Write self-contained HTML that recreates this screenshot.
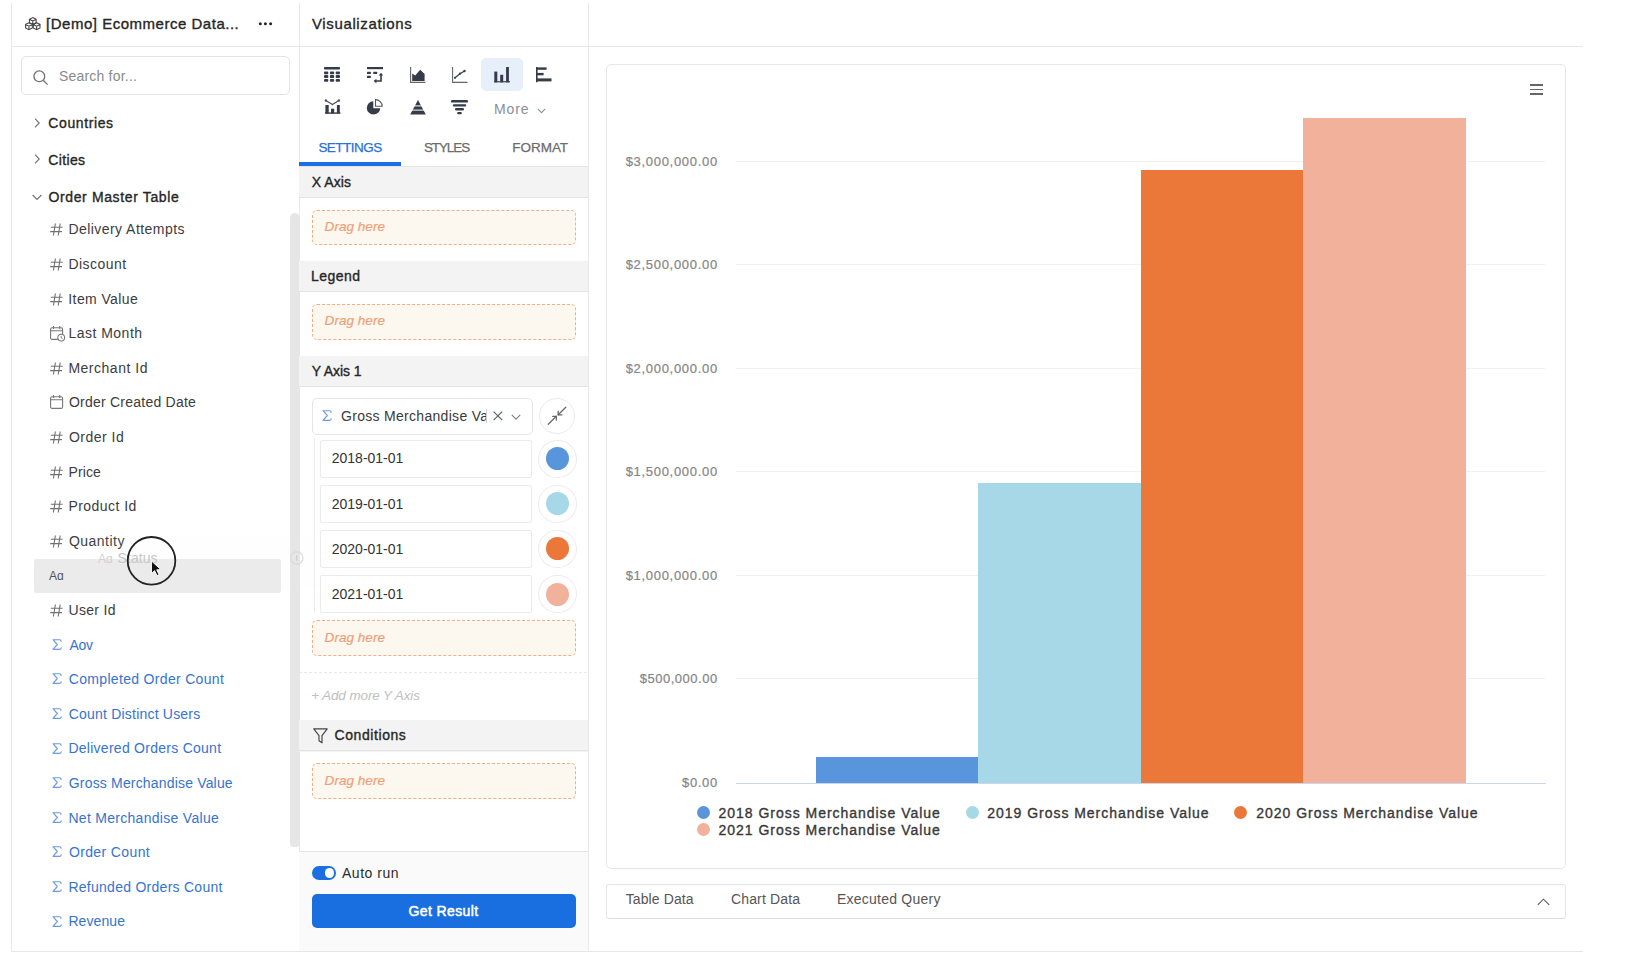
<!DOCTYPE html>
<html><head><meta charset="utf-8"><style>
html,body{margin:0;padding:0;width:1634px;height:958px;overflow:hidden;background:#fff}
body{position:relative;font-family:"Liberation Sans",sans-serif}
.t{position:absolute;white-space:nowrap;font-family:"Liberation Sans",sans-serif}
</style></head><body>
<div style="position:absolute;left:10.5px;top:3px;width:1.0px;height:948px;background:#e9e9e9"></div>
<div style="position:absolute;left:11px;top:950.5px;width:1572px;height:1.0px;background:#e6e6e6"></div>
<div style="position:absolute;left:11px;top:45.5px;width:1572px;height:1.0px;background:#e8e8e8"></div>
<div style="position:absolute;left:298.5px;top:3px;width:1.0px;height:948px;background:#e9e9e9"></div>
<div style="position:absolute;left:587.5px;top:3px;width:1.0px;height:948px;background:#e9e9e9"></div>
<svg style="position:absolute;left:24.6px;top:16.8px;overflow:visible" width="15.6" height="13.2" viewBox="0.4 0.4 16.2 14.2" preserveAspectRatio="none"><g fill="none" stroke="#444" stroke-width="1.1"><path d="M8.5 1 L12 2.8 L12 6.6 L8.5 8.4 L5 6.6 L5 2.8 Z M5 2.8 L8.5 4.6 L12 2.8 M8.5 4.6 L8.5 8.4"/><path d="M4.5 6.6 L8 8.4 L8 12.2 L4.5 14 L1 12.2 L1 8.4 Z M1 8.4 L4.5 10.2 L8 8.4 M4.5 10.2 L4.5 14"/><path d="M12.5 6.6 L16 8.4 L16 12.2 L12.5 14 L9 12.2 L9 8.4 Z M9 8.4 L12.5 10.2 L16 8.4 M12.5 10.2 L12.5 14"/></g></svg>
<div class="t" style="left:46.00px;top:15.95px;font-size:15px;line-height:15px;font-weight:400;color:#262626;font-style:normal;letter-spacing:0.517px;-webkit-text-stroke:0.35px #262626;">[Demo] Ecommerce Data...</div>
<svg style="position:absolute;left:256px;top:20px;overflow:visible" width="18" height="8" viewBox="0 0 18 8" preserveAspectRatio="none"><circle cx="4.300000000000011" cy="3.8" r="1.5" fill="#262626"/><circle cx="9.399999999999977" cy="3.8" r="1.5" fill="#262626"/><circle cx="14.600000000000023" cy="3.8" r="1.5" fill="#262626"/></svg>
<div style="position:absolute;left:21px;top:56px;width:269px;height:39px;border:1px solid #e3e3e3;border-radius:5px;box-sizing:border-box;background:#fff"></div>
<svg style="position:absolute;left:32.5px;top:69.5px;overflow:visible" width="16" height="16" viewBox="0 0 16 16" preserveAspectRatio="none"><g fill="none" stroke="#707070" stroke-width="1.3"><circle cx="6.3" cy="6.3" r="5.4"/><path d="M10.2 10.2 L14.6 14.6"/></g></svg>
<div class="t" style="left:58.90px;top:68.60px;font-size:14px;line-height:14px;font-weight:400;color:#8a8a8a;font-style:normal;letter-spacing:0.208px;">Search for...</div>
<svg style="position:absolute;left:33.5px;top:117.5px;overflow:visible" width="6" height="10" viewBox="0 0 6 10" preserveAspectRatio="none"><path d="M1 0.6 L5.2 5 L1 9.4" fill="none" stroke="#707070" stroke-width="1.1"/></svg>
<div class="t" style="left:48.30px;top:116.10px;font-size:14px;line-height:14px;font-weight:400;color:#262626;font-style:normal;letter-spacing:0.613px;-webkit-text-stroke:0.35px #262626;">Countries</div>
<svg style="position:absolute;left:33.5px;top:154px;overflow:visible" width="6" height="10" viewBox="0 0 6 10" preserveAspectRatio="none"><path d="M1 0.6 L5.2 5 L1 9.4" fill="none" stroke="#707070" stroke-width="1.1"/></svg>
<div class="t" style="left:48.30px;top:152.60px;font-size:14px;line-height:14px;font-weight:400;color:#262626;font-style:normal;letter-spacing:0.340px;-webkit-text-stroke:0.35px #262626;">Cities</div>
<svg style="position:absolute;left:31.5px;top:193.5px;overflow:visible" width="10" height="6" viewBox="0 0 10 6" preserveAspectRatio="none"><path d="M0.6 1 L5 5.4 L9.4 1" fill="none" stroke="#707070" stroke-width="1.1"/></svg>
<div class="t" style="left:48.40px;top:189.60px;font-size:14px;line-height:14px;font-weight:400;color:#262626;font-style:normal;letter-spacing:0.635px;-webkit-text-stroke:0.35px #262626;">Order Master Table</div>
<svg style="position:absolute;left:50px;top:223.3px;overflow:visible" width="13" height="13" viewBox="0 0 13 13" preserveAspectRatio="none"><g fill="none" stroke="#707070" stroke-width="1.1"><path d="M5.4 0.5 L3.4 12.5 M10.2 0.5 L8.2 12.5 M0.8 4.2 L12.6 4.2 M0.2 8.6 L12 8.6"/></g></svg>
<div class="t" style="left:68.40px;top:222.40px;font-size:14px;line-height:14px;font-weight:400;color:#3c3c3c;font-style:normal;letter-spacing:0.450px;">Delivery Attempts</div>
<svg style="position:absolute;left:50px;top:257.90000000000003px;overflow:visible" width="13" height="13" viewBox="0 0 13 13" preserveAspectRatio="none"><g fill="none" stroke="#707070" stroke-width="1.1"><path d="M5.4 0.5 L3.4 12.5 M10.2 0.5 L8.2 12.5 M0.8 4.2 L12.6 4.2 M0.2 8.6 L12 8.6"/></g></svg>
<div class="t" style="left:68.40px;top:257.00px;font-size:14px;line-height:14px;font-weight:400;color:#3c3c3c;font-style:normal;letter-spacing:0.457px;">Discount</div>
<svg style="position:absolute;left:50px;top:292.5px;overflow:visible" width="13" height="13" viewBox="0 0 13 13" preserveAspectRatio="none"><g fill="none" stroke="#707070" stroke-width="1.1"><path d="M5.4 0.5 L3.4 12.5 M10.2 0.5 L8.2 12.5 M0.8 4.2 L12.6 4.2 M0.2 8.6 L12 8.6"/></g></svg>
<div class="t" style="left:68.30px;top:291.60px;font-size:14px;line-height:14px;font-weight:400;color:#3c3c3c;font-style:normal;letter-spacing:0.400px;">Item Value</div>
<svg style="position:absolute;left:49.5px;top:325.6px;overflow:visible" width="15" height="15" viewBox="0 0 15 15" preserveAspectRatio="none"><g fill="none" stroke="#777" stroke-width="1.1"><rect x="0.6" y="1.8" width="12" height="11.6" rx="1.5"/><path d="M0.6 4.8 L12.6 4.8 M3.5 0 L3.5 3 M9.7 0 L9.7 3"/></g><circle cx="11.2" cy="11.6" r="3.4" fill="#fff" stroke="#777" stroke-width="1.1"/><path d="M11.2 9.8 L11.2 11.8 L12.6 12.6" fill="none" stroke="#777" stroke-width="0.9"/></svg>
<div class="t" style="left:68.40px;top:326.20px;font-size:14px;line-height:14px;font-weight:400;color:#3c3c3c;font-style:normal;letter-spacing:0.489px;">Last Month</div>
<svg style="position:absolute;left:50px;top:361.70000000000005px;overflow:visible" width="13" height="13" viewBox="0 0 13 13" preserveAspectRatio="none"><g fill="none" stroke="#707070" stroke-width="1.1"><path d="M5.4 0.5 L3.4 12.5 M10.2 0.5 L8.2 12.5 M0.8 4.2 L12.6 4.2 M0.2 8.6 L12 8.6"/></g></svg>
<div class="t" style="left:68.40px;top:360.80px;font-size:14px;line-height:14px;font-weight:400;color:#3c3c3c;font-style:normal;letter-spacing:0.510px;">Merchant Id</div>
<svg style="position:absolute;left:49.5px;top:394.8px;overflow:visible" width="15" height="15" viewBox="0 0 15 15" preserveAspectRatio="none"><g fill="none" stroke="#777" stroke-width="1.1"><rect x="0.6" y="1.8" width="12" height="11.6" rx="1.5"/><path d="M0.6 4.8 L12.6 4.8 M3.5 0 L3.5 3 M9.7 0 L9.7 3"/></g></svg>
<div class="t" style="left:68.90px;top:395.40px;font-size:14px;line-height:14px;font-weight:400;color:#3c3c3c;font-style:normal;letter-spacing:0.235px;">Order Created Date</div>
<svg style="position:absolute;left:50px;top:430.90000000000003px;overflow:visible" width="13" height="13" viewBox="0 0 13 13" preserveAspectRatio="none"><g fill="none" stroke="#707070" stroke-width="1.1"><path d="M5.4 0.5 L3.4 12.5 M10.2 0.5 L8.2 12.5 M0.8 4.2 L12.6 4.2 M0.2 8.6 L12 8.6"/></g></svg>
<div class="t" style="left:68.90px;top:430.00px;font-size:14px;line-height:14px;font-weight:400;color:#3c3c3c;font-style:normal;letter-spacing:0.500px;">Order Id</div>
<svg style="position:absolute;left:50px;top:465.5px;overflow:visible" width="13" height="13" viewBox="0 0 13 13" preserveAspectRatio="none"><g fill="none" stroke="#707070" stroke-width="1.1"><path d="M5.4 0.5 L3.4 12.5 M10.2 0.5 L8.2 12.5 M0.8 4.2 L12.6 4.2 M0.2 8.6 L12 8.6"/></g></svg>
<div class="t" style="left:68.40px;top:464.60px;font-size:14px;line-height:14px;font-weight:400;color:#3c3c3c;font-style:normal;letter-spacing:0.150px;">Price</div>
<svg style="position:absolute;left:50px;top:500.1px;overflow:visible" width="13" height="13" viewBox="0 0 13 13" preserveAspectRatio="none"><g fill="none" stroke="#707070" stroke-width="1.1"><path d="M5.4 0.5 L3.4 12.5 M10.2 0.5 L8.2 12.5 M0.8 4.2 L12.6 4.2 M0.2 8.6 L12 8.6"/></g></svg>
<div class="t" style="left:68.40px;top:499.20px;font-size:14px;line-height:14px;font-weight:400;color:#3c3c3c;font-style:normal;letter-spacing:0.456px;">Product Id</div>
<svg style="position:absolute;left:50px;top:534.7px;overflow:visible" width="13" height="13" viewBox="0 0 13 13" preserveAspectRatio="none"><g fill="none" stroke="#707070" stroke-width="1.1"><path d="M5.4 0.5 L3.4 12.5 M10.2 0.5 L8.2 12.5 M0.8 4.2 L12.6 4.2 M0.2 8.6 L12 8.6"/></g></svg>
<div class="t" style="left:68.90px;top:533.80px;font-size:14px;line-height:14px;font-weight:400;color:#3c3c3c;font-style:normal;letter-spacing:0.486px;">Quantity</div>
<svg style="position:absolute;left:50px;top:603.9000000000001px;overflow:visible" width="13" height="13" viewBox="0 0 13 13" preserveAspectRatio="none"><g fill="none" stroke="#707070" stroke-width="1.1"><path d="M5.4 0.5 L3.4 12.5 M10.2 0.5 L8.2 12.5 M0.8 4.2 L12.6 4.2 M0.2 8.6 L12 8.6"/></g></svg>
<div class="t" style="left:68.50px;top:603.00px;font-size:14px;line-height:14px;font-weight:400;color:#3c3c3c;font-style:normal;letter-spacing:0.317px;">User Id</div>
<svg style="position:absolute;left:51.5px;top:638.8px;overflow:visible" width="10" height="11" viewBox="0 0 10 11" preserveAspectRatio="none"><path d="M9 2.2 Q9 0.7 7.6 0.7 L1 0.7 L5.3 5.5 L1 10.3 L7.8 10.3 Q9.1 10.3 9.2 8.8" fill="none" stroke="#6c9be0" stroke-width="1.15" stroke-linejoin="round" stroke-linecap="round"/></svg>
<div class="t" style="left:69.50px;top:637.60px;font-size:14px;line-height:14px;font-weight:400;color:#3474d0;font-style:normal;letter-spacing:-0.350px;">Aov</div>
<svg style="position:absolute;left:51.5px;top:673.4px;overflow:visible" width="10" height="11" viewBox="0 0 10 11" preserveAspectRatio="none"><path d="M9 2.2 Q9 0.7 7.6 0.7 L1 0.7 L5.3 5.5 L1 10.3 L7.8 10.3 Q9.1 10.3 9.2 8.8" fill="none" stroke="#6c9be0" stroke-width="1.15" stroke-linejoin="round" stroke-linecap="round"/></svg>
<div class="t" style="left:68.80px;top:672.20px;font-size:14px;line-height:14px;font-weight:400;color:#3474d0;font-style:normal;letter-spacing:0.320px;">Completed Order Count</div>
<svg style="position:absolute;left:51.5px;top:708.0px;overflow:visible" width="10" height="11" viewBox="0 0 10 11" preserveAspectRatio="none"><path d="M9 2.2 Q9 0.7 7.6 0.7 L1 0.7 L5.3 5.5 L1 10.3 L7.8 10.3 Q9.1 10.3 9.2 8.8" fill="none" stroke="#6c9be0" stroke-width="1.15" stroke-linejoin="round" stroke-linecap="round"/></svg>
<div class="t" style="left:68.80px;top:706.80px;font-size:14px;line-height:14px;font-weight:400;color:#3474d0;font-style:normal;letter-spacing:0.200px;">Count Distinct Users</div>
<svg style="position:absolute;left:51.5px;top:742.5999999999999px;overflow:visible" width="10" height="11" viewBox="0 0 10 11" preserveAspectRatio="none"><path d="M9 2.2 Q9 0.7 7.6 0.7 L1 0.7 L5.3 5.5 L1 10.3 L7.8 10.3 Q9.1 10.3 9.2 8.8" fill="none" stroke="#6c9be0" stroke-width="1.15" stroke-linejoin="round" stroke-linecap="round"/></svg>
<div class="t" style="left:68.40px;top:741.40px;font-size:14px;line-height:14px;font-weight:400;color:#3474d0;font-style:normal;letter-spacing:0.267px;">Delivered Orders Count</div>
<svg style="position:absolute;left:51.5px;top:777.2px;overflow:visible" width="10" height="11" viewBox="0 0 10 11" preserveAspectRatio="none"><path d="M9 2.2 Q9 0.7 7.6 0.7 L1 0.7 L5.3 5.5 L1 10.3 L7.8 10.3 Q9.1 10.3 9.2 8.8" fill="none" stroke="#6c9be0" stroke-width="1.15" stroke-linejoin="round" stroke-linecap="round"/></svg>
<div class="t" style="left:68.80px;top:776.00px;font-size:14px;line-height:14px;font-weight:400;color:#3474d0;font-style:normal;letter-spacing:0.173px;">Gross Merchandise Value</div>
<svg style="position:absolute;left:51.5px;top:811.8px;overflow:visible" width="10" height="11" viewBox="0 0 10 11" preserveAspectRatio="none"><path d="M9 2.2 Q9 0.7 7.6 0.7 L1 0.7 L5.3 5.5 L1 10.3 L7.8 10.3 Q9.1 10.3 9.2 8.8" fill="none" stroke="#6c9be0" stroke-width="1.15" stroke-linejoin="round" stroke-linecap="round"/></svg>
<div class="t" style="left:68.40px;top:810.60px;font-size:14px;line-height:14px;font-weight:400;color:#3474d0;font-style:normal;letter-spacing:0.295px;">Net Merchandise Value</div>
<svg style="position:absolute;left:51.5px;top:846.4000000000001px;overflow:visible" width="10" height="11" viewBox="0 0 10 11" preserveAspectRatio="none"><path d="M9 2.2 Q9 0.7 7.6 0.7 L1 0.7 L5.3 5.5 L1 10.3 L7.8 10.3 Q9.1 10.3 9.2 8.8" fill="none" stroke="#6c9be0" stroke-width="1.15" stroke-linejoin="round" stroke-linecap="round"/></svg>
<div class="t" style="left:68.90px;top:845.20px;font-size:14px;line-height:14px;font-weight:400;color:#3474d0;font-style:normal;letter-spacing:0.380px;">Order Count</div>
<svg style="position:absolute;left:51.5px;top:881.0px;overflow:visible" width="10" height="11" viewBox="0 0 10 11" preserveAspectRatio="none"><path d="M9 2.2 Q9 0.7 7.6 0.7 L1 0.7 L5.3 5.5 L1 10.3 L7.8 10.3 Q9.1 10.3 9.2 8.8" fill="none" stroke="#6c9be0" stroke-width="1.15" stroke-linejoin="round" stroke-linecap="round"/></svg>
<div class="t" style="left:68.40px;top:879.80px;font-size:14px;line-height:14px;font-weight:400;color:#3474d0;font-style:normal;letter-spacing:0.270px;">Refunded Orders Count</div>
<svg style="position:absolute;left:51.5px;top:915.5999999999999px;overflow:visible" width="10" height="11" viewBox="0 0 10 11" preserveAspectRatio="none"><path d="M9 2.2 Q9 0.7 7.6 0.7 L1 0.7 L5.3 5.5 L1 10.3 L7.8 10.3 Q9.1 10.3 9.2 8.8" fill="none" stroke="#6c9be0" stroke-width="1.15" stroke-linejoin="round" stroke-linecap="round"/></svg>
<div class="t" style="left:68.40px;top:914.40px;font-size:14px;line-height:14px;font-weight:400;color:#3474d0;font-style:normal;letter-spacing:0.083px;">Revenue</div>
<div style="position:absolute;left:34px;top:559px;width:246.5px;height:34px;background:#ebebeb;border-radius:2px"></div>
<div class="t" style="left:49.00px;top:570.30px;font-size:12px;line-height:12px;font-weight:400;color:#555;font-style:normal;letter-spacing:0.000px;">A&#593;</div>
<div style="position:absolute;left:92px;top:536px;width:248px;height:54px;background:rgba(235,235,235,0.05)"></div>
<div class="t" style="left:98.00px;top:552.50px;font-size:12px;line-height:12px;font-weight:400;color:#d0d0d0;font-style:normal;letter-spacing:0.000px;">A&#593;</div>
<div class="t" style="left:117.60px;top:551.10px;font-size:14px;line-height:14px;font-weight:400;color:#c6c6c6;font-style:normal;letter-spacing:0.060px;">Status</div>
<div style="position:absolute;left:289.5px;top:213px;width:10.0px;height:633.5px;background:#e6e6e6;border-radius:5px 5px 4px 4px"></div>
<svg style="position:absolute;left:290px;top:551px;overflow:visible" width="14" height="14" viewBox="0 0 14 14" preserveAspectRatio="none"><circle cx="6.8" cy="6.9" r="6.2" fill="none" stroke="#d8d8d8" stroke-width="1.1"/><path d="M6.8 4.2 L6.8 9.8" stroke="#d0d0d0" stroke-width="1.5"/></svg>
<svg style="position:absolute;left:126.2px;top:535.5px;overflow:visible" width="50" height="50" viewBox="0 0 50 50" preserveAspectRatio="none"><circle cx="25.5" cy="24.8" r="23.8" fill="none" stroke="#222" stroke-width="1.8"/></svg>
<svg style="position:absolute;left:150px;top:560px;overflow:visible" width="14" height="18" viewBox="0 0 14 18" preserveAspectRatio="none"><path d="M1.5 1 L1.5 13.5 L4.6 10.6 L7 15.6 L9 14.7 L6.7 9.8 L10.8 9.6 Z" fill="#111" stroke="#fff" stroke-width="0.9"/></svg>
<div class="t" style="left:312.00px;top:15.55px;font-size:15px;line-height:15px;font-weight:400;color:#262626;font-style:normal;letter-spacing:0.631px;-webkit-text-stroke:0.35px #262626;">Visualizations</div>
<div style="position:absolute;left:481px;top:58px;width:42px;height:32.5px;background:#e7effa;border-radius:5px"></div>
<svg style="position:absolute;left:324.3px;top:67px;overflow:visible" width="16" height="16" viewBox="0 0 16 16" preserveAspectRatio="none"><g fill="#353b48"><rect x="0" y="0" width="16" height="2.5" rx="0.8"/><rect x="0" y="4.4" width="4.3" height="2.9" rx="1"/><rect x="5.9" y="4.4" width="4.3" height="2.9" rx="1"/><rect x="11.7" y="4.4" width="4.3" height="2.9" rx="1"/><rect x="0" y="8.1" width="4.3" height="2.9" rx="1"/><rect x="5.9" y="8.1" width="4.3" height="2.9" rx="1"/><rect x="11.7" y="8.1" width="4.3" height="2.9" rx="1"/><rect x="0" y="11.9" width="4.3" height="2.9" rx="1"/><rect x="5.9" y="11.9" width="4.3" height="2.9" rx="1"/><rect x="11.7" y="11.9" width="4.3" height="2.9" rx="1"/></g></svg>
<svg style="position:absolute;left:366.5px;top:67px;overflow:visible" width="16" height="16" viewBox="0 0 16 16" preserveAspectRatio="none"><g fill="#353b48"><rect x="0" y="0" width="16" height="2.2"/><rect x="0" y="4.8" width="3.8" height="2.3" rx="0.5"/><rect x="6.3" y="4.8" width="3.8" height="2.3" rx="0.5"/><rect x="0" y="8.7" width="3.8" height="2.3" rx="0.5"/></g><g fill="none" stroke="#353b48" stroke-width="1.6"><path d="M14 7.5 L14 14 L8 14"/></g><path d="M11.8 8.6 L14 5.8 L16.2 8.6 Z M9.4 11.8 L6.6 14 L9.4 16.2 Z" fill="#353b48"/></svg>
<svg style="position:absolute;left:410px;top:67px;overflow:visible" width="16" height="16" viewBox="0 0 16 16" preserveAspectRatio="none"><path d="M0.6 0 L0.6 15.4 L15.5 15.4" fill="none" stroke="#666" stroke-width="1.1"/><path d="M2.2 6.5 L5.2 8.5 L10.2 2.8 L14.6 7 L14.6 14 L2.2 14 Z" fill="#353b48"/></svg>
<svg style="position:absolute;left:451.5px;top:67px;overflow:visible" width="16" height="16" viewBox="0 0 16 16" preserveAspectRatio="none"><path d="M0.6 0 L0.6 15.4 L15.5 15.4" fill="none" stroke="#666" stroke-width="1.1"/><path d="M3 10.8 L8 6.7 L12.5 4" fill="none" stroke="#353b48" stroke-width="1.2"/><circle cx="3" cy="10.8" r="1.1" fill="#353b48"/><circle cx="8" cy="6.7" r="1.1" fill="#353b48"/><circle cx="12.5" cy="4" r="1.2" fill="#353b48"/></svg>
<svg style="position:absolute;left:494px;top:67px;overflow:visible" width="16" height="16" viewBox="0 0 16 16" preserveAspectRatio="none"><g fill="#353b48"><rect x="0.3" y="4.6" width="3" height="10.8"/><rect x="6.2" y="7.8" width="3" height="7.6"/><rect x="12.1" y="0" width="2.8" height="15.4"/><rect x="0" y="14.2" width="16" height="1.1"/></g></svg>
<svg style="position:absolute;left:535.5px;top:67px;overflow:visible" width="16" height="16" viewBox="0 0 16 16" preserveAspectRatio="none"><g fill="#353b48"><rect x="0" y="0" width="1.6" height="15.2"/><rect x="1" y="0.4" width="9.6" height="2.4"/><rect x="1" y="5.9" width="6.6" height="2.4"/><rect x="1" y="11.4" width="14.5" height="3"/></g></svg>
<svg style="position:absolute;left:324.6px;top:99px;overflow:visible" width="16" height="16" viewBox="0 0 16 16" preserveAspectRatio="none"><g fill="#353b48"><rect x="0.4" y="6" width="3.3" height="8.4"/><rect x="6" y="9.7" width="3.2" height="4.7"/><rect x="11.9" y="6" width="2.9" height="8.4"/><rect x="0" y="13.4" width="15.4" height="1.4"/></g><path d="M0.9 1.5 L7.4 5.5 L13.9 1.5" fill="none" stroke="#555" stroke-width="1.2"/><circle cx="0.9" cy="1.5" r="1.2" fill="#555"/><circle cx="13.9" cy="1.5" r="1.2" fill="#555"/></svg>
<svg style="position:absolute;left:366px;top:98.5px;overflow:visible" width="17" height="17" viewBox="0 0 17 17" preserveAspectRatio="none"><path d="M7.3 2.2 A6.7 6.7 0 1 0 14.2 9.2 L7.3 9.2 Z" fill="#353b48"/><path d="M9.5 0.6 A6.7 6.7 0 0 1 16.2 7.2 L9.5 7.2 Z" fill="#fff" stroke="#555" stroke-width="1.1"/></svg>
<svg style="position:absolute;left:409.5px;top:99.5px;overflow:visible" width="16" height="15" viewBox="0 0 16 15" preserveAspectRatio="none"><path d="M8 0 L15.8 14.6 L0.2 14.6 Z" fill="#353b48"/><rect x="0" y="5.4" width="16" height="1" fill="#fff"/><rect x="0" y="9.6" width="16" height="1" fill="#fff"/></svg>
<svg style="position:absolute;left:450.5px;top:99.5px;overflow:visible" width="17" height="15" viewBox="0 0 17 15" preserveAspectRatio="none"><g fill="#353b48"><rect x="0" y="0" width="17" height="2.6" rx="1.2"/><rect x="1.8" y="4.2" width="13.4" height="2.4" rx="1.1"/><rect x="4" y="8.1" width="9" height="2.4" rx="1.1"/><rect x="6.2" y="11.9" width="4.6" height="2.4" rx="1"/></g></svg>
<div class="t" style="left:493.90px;top:101.60px;font-size:14px;line-height:14px;font-weight:400;color:#8a909a;font-style:normal;letter-spacing:0.933px;">More</div>
<svg style="position:absolute;left:537px;top:108px;overflow:visible" width="9" height="6" viewBox="0 0 9 6" preserveAspectRatio="none"><path d="M0.8 0.8 L4.5 4.6 L8.2 0.8" fill="none" stroke="#8a909a" stroke-width="1.1"/></svg>
<div class="t" style="left:318.40px;top:141.22px;font-size:13.5px;line-height:13.5px;font-weight:400;color:#2771d8;font-style:normal;letter-spacing:-0.529px;-webkit-text-stroke:0.25px #2771d8;">SETTINGS</div>
<div class="t" style="left:423.90px;top:141.22px;font-size:13.5px;line-height:13.5px;font-weight:400;color:#6b6b6b;font-style:normal;letter-spacing:-1.100px;-webkit-text-stroke:0.25px #6b6b6b;">STYLES</div>
<div class="t" style="left:512.30px;top:141.22px;font-size:13.5px;line-height:13.5px;font-weight:400;color:#6b6b6b;font-style:normal;letter-spacing:-0.040px;-webkit-text-stroke:0.25px #6b6b6b;">FORMAT</div>
<div style="position:absolute;left:299px;top:165.5px;width:289px;height:1.0px;background:#e6e6e6"></div>
<div style="position:absolute;left:299px;top:162px;width:101.5px;height:3.5px;background:#1b6fe0"></div>
<div style="position:absolute;left:299px;top:166.5px;width:289px;height:31.5px;background:#f3f3f3"></div>
<div style="position:absolute;left:299px;top:196.8px;width:289px;height:1.1999999999999886px;background:#e4e4e4"></div>
<div class="t" style="left:311.70px;top:174.80px;font-size:14px;line-height:14px;font-weight:400;color:#262626;font-style:normal;letter-spacing:0.080px;-webkit-text-stroke:0.35px #262626;">X Axis</div>
<div style="position:absolute;left:311.5px;top:209.5px;width:264.5px;height:35.5px;border:1px dashed #f2ae88;border-radius:5px;box-sizing:border-box;background:#fcf7ef"></div>
<div class="t" style="left:324.60px;top:220.33px;font-size:13.5px;line-height:13.5px;font-weight:400;color:#ef9f78;font-style:italic;letter-spacing:0.037px;-webkit-text-stroke:0.2px #ef9f78;">Drag here</div>
<div style="position:absolute;left:299px;top:260.5px;width:289px;height:31.5px;background:#f3f3f3"></div>
<div style="position:absolute;left:299px;top:290.8px;width:289px;height:1.1999999999999886px;background:#e4e4e4"></div>
<div class="t" style="left:310.90px;top:268.60px;font-size:14px;line-height:14px;font-weight:400;color:#262626;font-style:normal;letter-spacing:0.480px;-webkit-text-stroke:0.35px #262626;">Legend</div>
<div style="position:absolute;left:311.5px;top:304px;width:264.5px;height:36px;border:1px dashed #f2ae88;border-radius:5px;box-sizing:border-box;background:#fcf7ef"></div>
<div class="t" style="left:324.60px;top:314.32px;font-size:13.5px;line-height:13.5px;font-weight:400;color:#ef9f78;font-style:italic;letter-spacing:0.037px;-webkit-text-stroke:0.2px #ef9f78;">Drag here</div>
<div style="position:absolute;left:299px;top:355.5px;width:289px;height:31.5px;background:#f3f3f3"></div>
<div style="position:absolute;left:299px;top:385.8px;width:289px;height:1.1999999999999886px;background:#e4e4e4"></div>
<div class="t" style="left:311.70px;top:363.80px;font-size:14px;line-height:14px;font-weight:400;color:#262626;font-style:normal;letter-spacing:-0.057px;-webkit-text-stroke:0.35px #262626;">Y Axis 1</div>
<div style="position:absolute;left:312px;top:397.5px;width:220.5px;height:37.0px;border:1px solid #e6e6e6;border-radius:5px;box-sizing:border-box;background:#fff"></div>
<svg style="position:absolute;left:321.8px;top:410px;overflow:visible" width="10" height="11" viewBox="0 0 10 11" preserveAspectRatio="none"><path d="M9 2.2 Q9 0.7 7.6 0.7 L1 0.7 L5.3 5.5 L1 10.3 L7.8 10.3 Q9.1 10.3 9.2 8.8" fill="none" stroke="#6c9be0" stroke-width="1.15" stroke-linejoin="round" stroke-linecap="round"/></svg>
<div style="position:absolute;left:341px;top:408.9px;width:145px;overflow:hidden;white-space:nowrap;font-size:14px;line-height:14px;color:#3a3a3a;letter-spacing:0.3px">Gross Merchandise Value</div>
<div style="position:absolute;left:486px;top:409px;width:1px;height:14px;background:#cfcfcf"></div>
<svg style="position:absolute;left:492.5px;top:411px;overflow:visible" width="10" height="10" viewBox="0 0 10 10" preserveAspectRatio="none"><path d="M0.6 0.6 L9.2 9.2 M9.2 0.6 L0.6 9.2" stroke="#5a6070" stroke-width="1.2"/></svg>
<svg style="position:absolute;left:510.5px;top:413.5px;overflow:visible" width="10" height="7" viewBox="0 0 10 7" preserveAspectRatio="none"><path d="M0.8 0.8 L5 5.2 L9.2 0.8" fill="none" stroke="#7a7f88" stroke-width="1.1"/></svg>
<div style="position:absolute;left:539px;top:397.8px;width:36.200000000000045px;height:36.19999999999999px;border:1px solid #ebebeb;border-radius:50%;box-sizing:border-box;background:#fff"></div>
<svg style="position:absolute;left:547px;top:406px;overflow:visible" width="20" height="20" viewBox="0 0 20 20" preserveAspectRatio="none"><g fill="none" stroke="#666" stroke-width="1.25" stroke-linecap="round"><path d="M1.3 18.3 L9.3 10.3 M18.8 1.2 L11.2 8.8"/><path d="M5.6 10.3 L9.3 10.3 L9.3 14 M15 8.8 L11.2 8.8 L11.2 5"/></g></svg>
<div style="position:absolute;left:313.5px;top:438px;width:1.0px;height:175px;background:#ececec"></div>
<div style="position:absolute;left:320px;top:439.5px;width:212px;height:38.5px;border:1px solid #ebebeb;border-radius:2px;box-sizing:border-box;background:#fff"></div>
<div class="t" style="left:331.80px;top:451.40px;font-size:14px;line-height:14px;font-weight:400;color:#333;font-style:normal;letter-spacing:-0.011px;">2018-01-01</div>
<div style="position:absolute;left:538px;top:439.7px;width:38.5px;height:38.0px;border:1px solid #ececec;border-radius:50%;box-sizing:border-box;background:#fff"></div>
<div style="position:absolute;left:545.7px;top:447.2px;width:23.0px;height:23.0px;background:#5895dc;border-radius:50%"></div>
<div style="position:absolute;left:320px;top:484.6px;width:212px;height:38.5px;border:1px solid #ebebeb;border-radius:2px;box-sizing:border-box;background:#fff"></div>
<div class="t" style="left:331.80px;top:496.50px;font-size:14px;line-height:14px;font-weight:400;color:#333;font-style:normal;letter-spacing:-0.011px;">2019-01-01</div>
<div style="position:absolute;left:538px;top:484.8px;width:38.5px;height:37.99999999999994px;border:1px solid #ececec;border-radius:50%;box-sizing:border-box;background:#fff"></div>
<div style="position:absolute;left:545.7px;top:492.3px;width:23.0px;height:22.999999999999943px;background:#a7d8e7;border-radius:50%"></div>
<div style="position:absolute;left:320px;top:529.7px;width:212px;height:38.5px;border:1px solid #ebebeb;border-radius:2px;box-sizing:border-box;background:#fff"></div>
<div class="t" style="left:331.80px;top:541.60px;font-size:14px;line-height:14px;font-weight:400;color:#333;font-style:normal;letter-spacing:-0.011px;">2020-01-01</div>
<div style="position:absolute;left:538px;top:529.9000000000001px;width:38.5px;height:38.0px;border:1px solid #ececec;border-radius:50%;box-sizing:border-box;background:#fff"></div>
<div style="position:absolute;left:545.7px;top:537.4000000000001px;width:23.0px;height:23.0px;background:#eb7839;border-radius:50%"></div>
<div style="position:absolute;left:320px;top:574.8px;width:212px;height:38.5px;border:1px solid #ebebeb;border-radius:2px;box-sizing:border-box;background:#fff"></div>
<div class="t" style="left:331.80px;top:586.70px;font-size:14px;line-height:14px;font-weight:400;color:#333;font-style:normal;letter-spacing:-0.011px;">2021-01-01</div>
<div style="position:absolute;left:538px;top:575.0px;width:38.5px;height:38.0px;border:1px solid #ececec;border-radius:50%;box-sizing:border-box;background:#fff"></div>
<div style="position:absolute;left:545.7px;top:582.5px;width:23.0px;height:23.0px;background:#f2b19a;border-radius:50%"></div>
<div style="position:absolute;left:311.5px;top:620px;width:264.5px;height:36px;border:1px dashed #f2ae88;border-radius:5px;box-sizing:border-box;background:#fcf7ef"></div>
<div class="t" style="left:324.60px;top:630.52px;font-size:13.5px;line-height:13.5px;font-weight:400;color:#ef9f78;font-style:italic;letter-spacing:0.037px;-webkit-text-stroke:0.2px #ef9f78;">Drag here</div>
<div style="position:absolute;left:299px;top:672px;width:289px;height:1px;background-image:linear-gradient(90deg,#e8e8e8 60%,transparent 60%);background-size:5px 1px"></div>
<div class="t" style="left:311.20px;top:688.82px;font-size:13.5px;line-height:13.5px;font-weight:400;color:#c0c0c0;font-style:italic;letter-spacing:-0.119px;">+ Add more Y Axis</div>
<div style="position:absolute;left:299px;top:720px;width:289px;height:31.5px;background:#f3f3f3"></div>
<div style="position:absolute;left:299px;top:750.3px;width:289px;height:1.2000000000000455px;background:#e4e4e4"></div>
<div class="t" style="left:334.60px;top:728.40px;font-size:14px;line-height:14px;font-weight:400;color:#262626;font-style:normal;letter-spacing:0.567px;-webkit-text-stroke:0.35px #262626;">Conditions</div>
<svg style="position:absolute;left:313px;top:728px;overflow:visible" width="15" height="16" viewBox="0 0 15 16" preserveAspectRatio="none"><path d="M0.8 0.8 L14.2 0.8 L9 7.6 L9 14.8 L6 12.8 L6 7.6 Z" fill="none" stroke="#444" stroke-width="1.15" stroke-linejoin="round"/></svg>
<div style="position:absolute;left:311.5px;top:763px;width:264.5px;height:35.5px;border:1px dashed #f2ae88;border-radius:5px;box-sizing:border-box;background:#fcf7ef"></div>
<div class="t" style="left:324.60px;top:773.82px;font-size:13.5px;line-height:13.5px;font-weight:400;color:#ef9f78;font-style:italic;letter-spacing:0.037px;-webkit-text-stroke:0.2px #ef9f78;">Drag here</div>
<div style="position:absolute;left:299px;top:851px;width:289px;height:99.5px;background:#fafafa"></div>
<div style="position:absolute;left:299px;top:850.5px;width:289px;height:1.0px;background:#e4e4e4"></div>
<div style="position:absolute;left:311.5px;top:866px;width:24.5px;height:14px;background:#1b6fe0;border-radius:7px"></div>
<div style="position:absolute;left:324.5px;top:868.2px;width:9.5px;height:9.5px;background:#fff;border-radius:50%"></div>
<div class="t" style="left:342.00px;top:865.90px;font-size:14px;line-height:14px;font-weight:400;color:#2c2c2c;font-style:normal;letter-spacing:0.514px;">Auto run</div>
<div style="position:absolute;left:311.5px;top:893.5px;width:264.5px;height:34.5px;background:#1a6fe0;border-radius:5px"></div>
<div class="t" style="left:408.60px;top:904.40px;font-size:14px;line-height:14px;font-weight:400;color:#fff;font-style:normal;letter-spacing:0.367px;-webkit-text-stroke:0.5px #fff;">Get Result</div>
<div style="position:absolute;left:606px;top:64px;width:960px;height:805px;border:1px solid #e6e6e6;border-radius:5px;box-sizing:border-box;background:#fff"></div>
<div style="position:absolute;left:1530px;top:84.3px;width:13px;height:1.5999999999999943px;background:#666"></div>
<div style="position:absolute;left:1530px;top:88.8px;width:13px;height:1.5999999999999943px;background:#666"></div>
<div style="position:absolute;left:1530px;top:93.3px;width:13px;height:1.5999999999999943px;background:#666"></div>
<div class="t" style="right:916.0999999999999px;top:154.95px;font-size:13px;line-height:13px;font-weight:400;color:#858585;font-style:normal;letter-spacing:0.700px;-webkit-text-stroke:0.2px #858585;">$3,000,000.00</div>
<div style="position:absolute;left:736px;top:160.5px;width:809px;height:1.0px;background:#f0f0f0"></div>
<div class="t" style="right:916.0999999999999px;top:258.45px;font-size:13px;line-height:13px;font-weight:400;color:#858585;font-style:normal;letter-spacing:0.700px;-webkit-text-stroke:0.2px #858585;">$2,500,000.00</div>
<div style="position:absolute;left:736px;top:264.0px;width:809px;height:1.0px;background:#f0f0f0"></div>
<div class="t" style="right:916.0999999999999px;top:361.95px;font-size:13px;line-height:13px;font-weight:400;color:#858585;font-style:normal;letter-spacing:0.700px;-webkit-text-stroke:0.2px #858585;">$2,000,000.00</div>
<div style="position:absolute;left:736px;top:367.5px;width:809px;height:1.0px;background:#f0f0f0"></div>
<div class="t" style="right:916.0999999999999px;top:465.45px;font-size:13px;line-height:13px;font-weight:400;color:#858585;font-style:normal;letter-spacing:0.700px;-webkit-text-stroke:0.2px #858585;">$1,500,000.00</div>
<div style="position:absolute;left:736px;top:471.0px;width:809px;height:1.0px;background:#f0f0f0"></div>
<div class="t" style="right:916.0999999999999px;top:568.95px;font-size:13px;line-height:13px;font-weight:400;color:#858585;font-style:normal;letter-spacing:0.700px;-webkit-text-stroke:0.2px #858585;">$1,000,000.00</div>
<div style="position:absolute;left:736px;top:574.5px;width:809px;height:1.0px;background:#f0f0f0"></div>
<div class="t" style="right:916.28px;top:672.45px;font-size:13px;line-height:13px;font-weight:400;color:#858585;font-style:normal;letter-spacing:0.520px;-webkit-text-stroke:0.2px #858585;">$500,000.00</div>
<div style="position:absolute;left:736px;top:678.0px;width:809px;height:1.0px;background:#f0f0f0"></div>
<div class="t" style="right:916.15px;top:775.95px;font-size:13px;line-height:13px;font-weight:400;color:#858585;font-style:normal;letter-spacing:0.650px;-webkit-text-stroke:0.2px #858585;">$0.00</div>
<div style="position:absolute;left:735.5px;top:782.5px;width:810.5px;height:1.2000000000000455px;background:#ccd6eb"></div>
<div style="position:absolute;left:815.7px;top:757.4px;width:162.29999999999995px;height:25.600000000000023px;background:#5895dc"></div>
<div style="position:absolute;left:978px;top:483.3px;width:162.79999999999995px;height:299.7px;background:#a7d8e7"></div>
<div style="position:absolute;left:1140.8px;top:170.1px;width:162.4000000000001px;height:612.9px;background:#eb7839"></div>
<div style="position:absolute;left:1303.2px;top:118px;width:162.79999999999995px;height:665px;background:#f2b19a"></div>
<div style="position:absolute;left:697.1px;top:805.5px;width:13.0px;height:13.0px;background:#5895dc;border-radius:50%"></div>
<div class="t" style="left:718.60px;top:805.70px;font-size:14px;line-height:14px;font-weight:400;color:#383838;font-style:normal;letter-spacing:0.970px;-webkit-text-stroke:0.35px #383838;">2018 Gross Merchandise Value</div>
<div style="position:absolute;left:966.1px;top:805.5px;width:13.0px;height:13.0px;background:#a7d8e7;border-radius:50%"></div>
<div class="t" style="left:987.30px;top:805.70px;font-size:14px;line-height:14px;font-weight:400;color:#383838;font-style:normal;letter-spacing:0.970px;-webkit-text-stroke:0.35px #383838;">2019 Gross Merchandise Value</div>
<div style="position:absolute;left:1234.4px;top:805.5px;width:13.0px;height:13.0px;background:#eb7839;border-radius:50%"></div>
<div class="t" style="left:1256.30px;top:805.70px;font-size:14px;line-height:14px;font-weight:400;color:#383838;font-style:normal;letter-spacing:0.970px;-webkit-text-stroke:0.35px #383838;">2020 Gross Merchandise Value</div>
<div style="position:absolute;left:697.1px;top:822.7px;width:13.0px;height:13.0px;background:#f2b19a;border-radius:50%"></div>
<div class="t" style="left:718.60px;top:822.90px;font-size:14px;line-height:14px;font-weight:400;color:#383838;font-style:normal;letter-spacing:0.970px;-webkit-text-stroke:0.35px #383838;">2021 Gross Merchandise Value</div>
<div style="position:absolute;left:606px;top:883.5px;width:959.8px;height:35.299999999999955px;border:1px solid #e6e6e6;border-bottom-color:#dcdcdc;border-radius:3px;box-sizing:border-box;background:#fff"></div>
<div class="t" style="left:625.70px;top:891.60px;font-size:14px;line-height:14px;font-weight:400;color:#555;font-style:normal;letter-spacing:0.111px;">Table Data</div>
<div class="t" style="left:731.00px;top:891.60px;font-size:14px;line-height:14px;font-weight:400;color:#555;font-style:normal;letter-spacing:0.144px;">Chart Data</div>
<div class="t" style="left:836.90px;top:891.60px;font-size:14px;line-height:14px;font-weight:400;color:#555;font-style:normal;letter-spacing:0.246px;">Executed Query</div>
<svg style="position:absolute;left:1537px;top:897.8px;overflow:visible" width="13" height="8" viewBox="0 0 13 8" preserveAspectRatio="none"><path d="M0.8 6.8 L6.5 1.2 L12.2 6.8" fill="none" stroke="#5a5a5a" stroke-width="1.1"/></svg>
</body></html>
